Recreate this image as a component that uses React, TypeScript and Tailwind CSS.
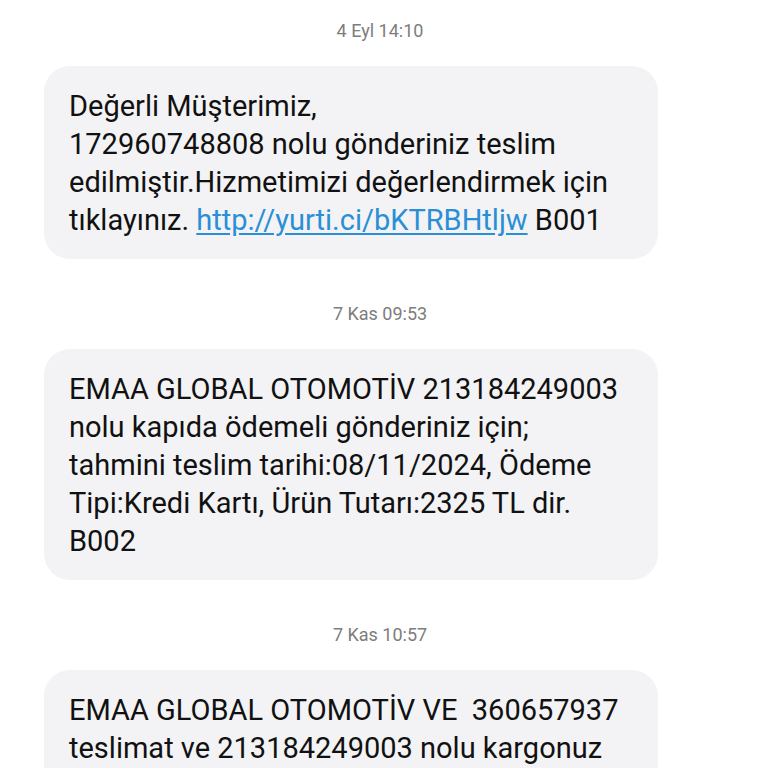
const font = { fontFamily: "Roboto, 'Noto Sans', sans-serif" };

function Stamp({ text }: { text: string }) {
  return (
    <div className="h-5 pr-2 text-center text-[18px] leading-5 text-[#7d7d7d]">{text}</div>
  );
}

function Bubble({ lines }: { lines: React.ReactNode[] }) {
  return (
    <div className="ml-[44px] w-[614px] rounded-[26px] bg-[#f3f3f5] px-[25px] pt-[21px] pb-[20px] text-[29px] leading-[38px] text-[#111111]">
      {lines.map((line, i) => (
        <div key={i} className="whitespace-pre">
          {line}
        </div>
      ))}
    </div>
  );
}

export default function App() {
  return (
    <div className="h-[768px] w-[768px] overflow-hidden bg-white" style={font}>
      <div className="pt-[21px]">
        <Stamp text="4 Eyl 14:10" />
      </div>
      <div className="mt-[25px]">
        <Bubble
          lines={[
            "Değerli Müşterimiz,",
            "172960748808 nolu gönderiniz teslim",
            "edilmiştir.Hizmetimizi değerlendirmek için",
            <>
              tıklayınız.{" "}
              <span className="text-[#2a8fd6] underline underline-offset-[3px]">http://yurti.ci/bKTRBHtljw</span> B001
            </>,
          ]}
        />
      </div>
      <div className="mt-[45px]">
        <Stamp text="7 Kas 09:53" />
      </div>
      <div className="mt-[25px]">
        <Bubble
          lines={[
            "EMAA GLOBAL OTOMOTİV 213184249003",
            "nolu kapıda ödemeli gönderiniz için;",
            "tahmini teslim tarihi:08/11/2024, Ödeme",
            "Tipi:Kredi Kartı, Ürün Tutarı:2325 TL dir.",
            "B002",
          ]}
        />
      </div>
      <div className="mt-[45px]">
        <Stamp text="7 Kas 10:57" />
      </div>
      <div className="mt-[25px]">
        <Bubble
          lines={[
            "EMAA GLOBAL OTOMOTİV VE  360657937",
            "teslimat ve 213184249003 nolu kargonuz",
            "teslim edilmiştir.",
          ]}
        />
      </div>
    </div>
  );
}
